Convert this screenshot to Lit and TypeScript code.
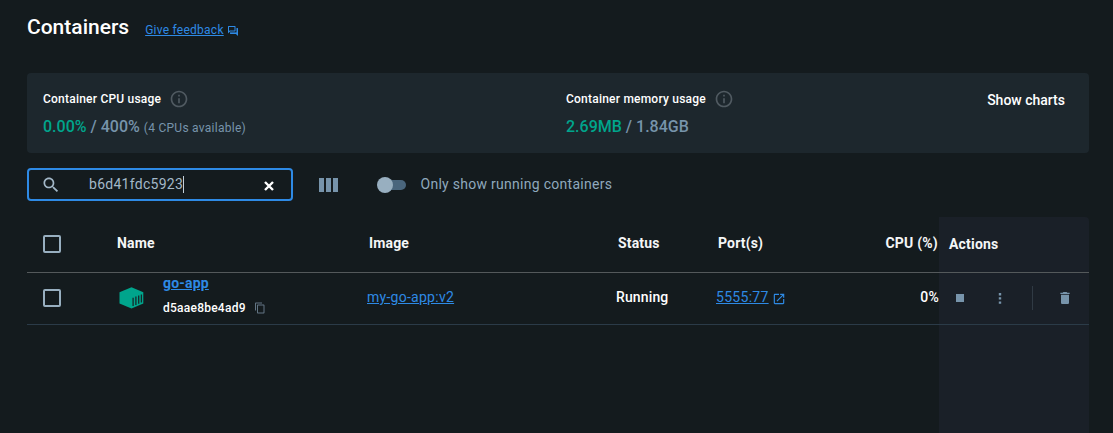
import { LitElement, html, css, svg } from "lit";
import { customElement, property } from "lit/decorators.js";

const infoIcon = svg`<svg class="info" width="20" height="20" viewBox="0 0 24 24"><path fill="currentColor" d="M11 7h2v2h-2zm0 4h2v6h-2zm1-9C6.48 2 2 6.48 2 12s4.48 10 10 10 10-4.48 10-10S17.52 2 12 2zm0 18c-4.41 0-8-3.59-8-8s3.59-8 8-8 8 3.59 8 8-3.59 8-8 8z"/></svg>`;

@customElement("usage-stat")
class UsageStat extends LitElement {
  @property() label = "";
  @property() used = "";
  @property() total = "";
  @property() note = "";

  static styles = css`
    :host { display: block; }
    .label { display: flex; align-items: center; height: 20px; font-size: 12px; font-weight: 500; letter-spacing: 0.22px; color: #fff; }
    svg { display: block; flex: none; }
    .info { margin-left: 8px; color: #505a61; }
    .values { margin-top: 8px; height: 20px; line-height: 20px; font-size: 16px; font-weight: 500; color: #7794ab; white-space: nowrap; }
    .used { color: #00a58c; }
    .note { font-size: 12px; font-weight: 400; letter-spacing: 0.27px; }
  `;

  render() {
    return html`
      <div class="label">${this.label}${infoIcon}</div>
      <div class="values"><span class="used">${this.used}</span> / ${this.total}
        ${this.note ? html`<span class="note">${this.note}</span>` : ""}</div>
    `;
  }
}

@customElement("app-root")
class AppRoot extends LitElement {
  static styles = css`
    :host {
      display: flex; flex-direction: column; box-sizing: border-box;
      height: 433px; padding: 0 24px 0 27px; overflow: hidden;
      background: #141b1e; color: #fff;
      font-family: Roboto, sans-serif; font-size: 14px;
    }
    svg { display: block; flex: none; }
    a { color: #2e8ae5; text-decoration: underline; }
    .top { display: flex; height: 73px; flex: none; }
    h1 { margin: 13px 16px 0 0; font-size: 21px; line-height: 28px; font-weight: 500; }
    .feedback { display: flex; height: 16px; margin-top: 22px; line-height: 16px; font-size: 12px; letter-spacing: 0.25px; }
    .feedback svg { margin: 3px 0 0 3px; color: #2e8ae5; }
    .card {
      display: grid; grid-template-columns: 523px 1fr auto; box-sizing: border-box;
      height: 80px; flex: none; padding: 16px 24px 0 16px; border-radius: 4px; background: #1d272d;
    }
    .charts { margin-top: 1px; line-height: 20px; font-weight: 500; font-size: 14px; }
    .tools { display: flex; align-items: center; height: 33px; flex: none; margin-top: 15px; color: #7794ab; }
    .search {
      display: flex; align-items: center; box-sizing: border-box; width: 266px; height: 33px;
      padding: 0 16px 0 12px; border: 2px solid #2e8ae5; border-radius: 4px; color: #a3b8c8;
    }
    .query { margin: -2px 0 0 28px; line-height: 20px; letter-spacing: 0.28px; }
    .caret { width: 1px; height: 17px; background: #c3d0da; }
    .clear { margin: 3px 1px 0 auto; color: #fff; }
    .columns { display: flex; gap: 2px; margin: 1px 39px 0 26px; }
    .columns i { width: 5px; height: 14px; background: #7794ab; }
    .switch { display: flex; align-items: center; width: 29px; height: 16px; margin: 1px 14.5px 0 0; isolation: isolate; }
    .knob { width: 16px; height: 16px; border-radius: 50%; background: #98afc0; z-index: 1; }
    .track { width: 21px; height: 10px; margin-left: -8px; border-radius: 5px; background: #4a667d; }
    .toggle-label { margin-top: -2px; color: #8fa9bd; letter-spacing: 0.28px; }
    .table { margin-top: 16px; flex: 1; display: flex; flex-direction: column; }
    .row { display: grid; grid-template-columns: 90px 250px 249px 100px 100px 123px 150px; flex: none; align-items: center; box-sizing: border-box; }
    .head { height: 56px; border-bottom: 1px solid #54595b; font-weight: 700; color: #f4f6f7; }
    .head .label { padding: 0 1px 3px 2px; letter-spacing: 0.15px; }
    .head .label.name-label { padding-left: 0; }
    .head .label.right { letter-spacing: 0.22px; }
    .body { height: 52px; border-bottom: 1px solid #2b3b48; font-weight: 500; }
    .row.rest { flex: 1; }
    .right { text-align: right; }
    .actions { align-self: stretch; display: flex; align-items: center; background: #1a2028; }
    .head .actions { padding: 0 0 2px 10px; border-top-right-radius: 4px; letter-spacing: 0.2px; }
    .body .actions { padding-bottom: 2px; color: #7794ab; }
    .box { width: 14px; height: 14px; margin-left: 16px; border: 2px solid #98afc0; border-radius: 2px; }
    .head .box { margin-top: -1px; }
    .body .box { margin-top: -2px; }
    .name { display: flex; align-items: center; margin-top: -7px; }
    .cube { margin: 5px 19px 0 2px; }
    .title { line-height: 20px; font-weight: 700; letter-spacing: 0.2px; }
    .id { display: flex; align-items: center; margin-top: 5px; height: 20px; font-size: 12px; letter-spacing: 0.24px; }
    .id svg { margin-left: 8px; color: #627584; }
    .link { font-weight: 400; }
    .image { margin-top: -3px; letter-spacing: 0.27px; }
    .status { margin-top: -4px; letter-spacing: 0.13px; }
    .ports { display: flex; align-items: center; margin-top: -3px; letter-spacing: 0.29px; }
    .ports svg { margin: 4px 0 0 3px; color: #2e8ae5; }
    .cpu { margin-top: -4px; letter-spacing: 0.2px; }
    .stop { width: 8px; height: 8px; margin-left: 17px; background: #7794ab; }
    .more { margin-left: 30px; }
    .rule { width: 1px; height: 24px; margin-left: 26px; background: #303a44; }
    .trash { margin-left: 24px; }
  `;

  render() {
    return html`
      <header class="top">
        <h1>Containers</h1>
        <div class="feedback"><a>Give feedback</a>
          <svg width="12" height="12" viewBox="0 0 24 24"><path fill="currentColor" fill-opacity=".45" d="M6 15H21V6h1v15l-4-3H6z"/><path fill="currentColor" d="M15 4v7H5.17L4 12.17V4h11m1-2H3c-.55 0-1 .45-1 1v14l4-4h10c.55 0 1-.45 1-1V3c0-.55-.45-1-1-1zm5 4h-2v9H6v2c0 .55.45 1 1 1h11l4 4V7c0-.55-.45-1-1-1z"/></svg>
        </div>
      </header>
      <section class="card">
        <usage-stat label="Container CPU usage" used="0.00%" total="400%" note="(4 CPUs available)"></usage-stat>
        <usage-stat label="Container memory usage" used="2.69MB" total="1.84GB"></usage-stat>
        <div class="charts">Show charts</div>
      </section>
      <section class="tools">
        <div class="search">
          <svg width="20" height="20" viewBox="0 0 24 24"><path fill="currentColor" d="M15.5 14h-.79l-.28-.27C15.41 12.59 16 11.11 16 9.5 16 5.91 13.09 3 9.5 3S3 5.91 3 9.5 5.91 16 9.5 16c1.61 0 3.09-.59 4.23-1.57l.27.28v.79l5 4.99L20.49 19l-4.99-5zm-6 0C7.01 14 5 11.99 5 9.5S7.01 5 9.5 5 14 7.01 14 9.5 11.99 14 9.5 14z"/></svg>
          <span class="query">b6d41fdc5923</span><span class="caret"></span>
          <svg class="clear" width="10" height="10" viewBox="0 0 10 10"><path d="M1 1l8 8M9 1l-8 8" stroke="currentColor" stroke-width="2.4"/></svg>
        </div>
        <div class="columns"><i></i><i></i><i></i></div>
        <div class="switch"><span class="knob"></span><span class="track"></span></div>
        <span class="toggle-label">Only show running containers</span>
      </section>
      <section class="table">
        <div class="row head">
          <div class="box"></div>
          <div class="label name-label">Name</div>
          <div class="label">Image</div>
          <div class="label">Status</div>
          <div class="label">Port(s)</div>
          <div class="label right">CPU (%)</div>
          <div class="actions">Actions</div>
        </div>
        <div class="row body">
          <div class="box"></div>
          <div class="name">
            <svg class="cube" width="25" height="22" viewBox="0 0 25 22"><path fill="#00a58c" d="M12.5.3L24.3 5.2V16.5L12.5 21.5L.5 16.5V5.2z"/><path d="M14.1 10.7v8.2M16.9 9.6v8.3M19.7 8.5v8.2M22.4 7.4v8.2" stroke="#14282a" stroke-width="1.3"/></svg>
            <div>
              <div class="title"><a>go-app</a></div>
              <div class="id">d5aae8be4ad9
                <svg width="12" height="12" viewBox="0 0 24 24"><path fill="currentColor" d="M16 1H4c-1.1 0-2 .9-2 2v14h2V3h12V1zm3 4H8c-1.1 0-2 .9-2 2v14c0 1.1.9 2 2 2h11c1.1 0 2-.9 2-2V7c0-1.1-.9-2-2-2zm0 16H8V7h11v14z"/></svg>
              </div>
            </div>
          </div>
          <div class="link image"><a>my-go-app:v2</a></div>
          <div class="status">Running</div>
          <div class="ports link"><a>5555:77</a>
            <svg width="14" height="14" viewBox="0 0 24 24"><path fill="currentColor" d="M19 19H5V5h7V3H5c-1.11 0-2 .9-2 2v14c0 1.1.89 2 2 2h14c1.1 0 2-.9 2-2v-7h-2v7zM14 3v2h3.59l-9.83 9.83 1.41 1.41L19 6.41V10h2V3h-7z"/></svg>
          </div>
          <div class="right cpu">0%</div>
          <div class="actions">
            <div class="stop"></div>
            <svg class="more" width="12" height="16" viewBox="0 0 12 16"><path fill="currentColor" d="M4.8 3h2.4v2.4H4.8zM4.8 7.2h2.4v2.4H4.8zM4.8 11.4h2.4v2.4H4.8z"/></svg>
            <div class="rule"></div>
            <svg class="trash" width="16" height="16" viewBox="0 0 24 24"><path fill="currentColor" d="M6 19c0 1.1.9 2 2 2h8c1.1 0 2-.9 2-2V7H6v12zM19 4h-3.5l-1-1h-5l-1 1H5v2h14V4z"/></svg>
          </div>
        </div>
        <div class="row rest"><span></span><span></span><span></span><span></span><span></span><span></span><div class="actions"></div></div>
      </section>
    `;
  }
}
